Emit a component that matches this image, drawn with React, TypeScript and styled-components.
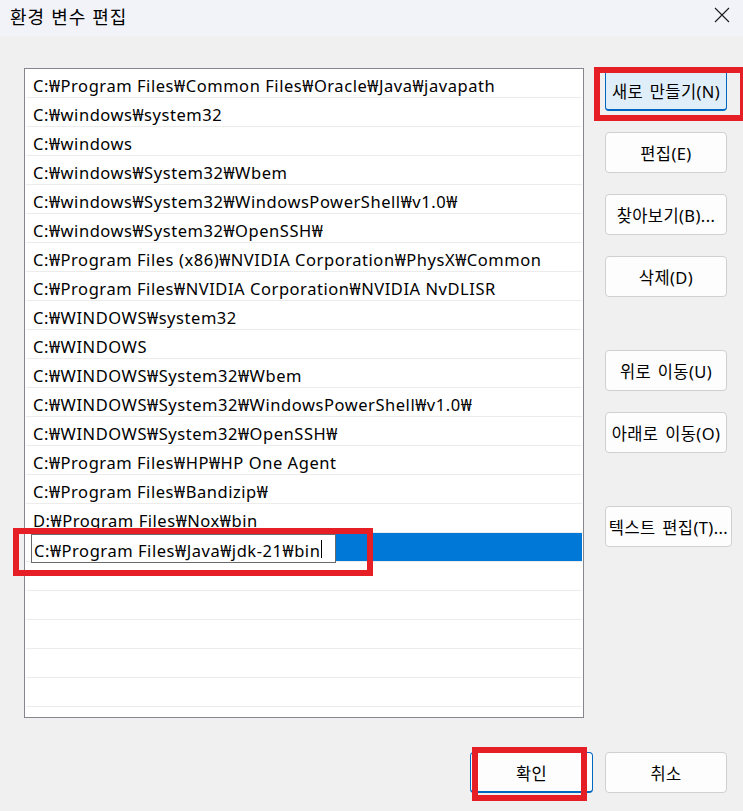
import React from "react";
import styled, { createGlobalStyle } from "styled-components";

const GlobalStyle = createGlobalStyle`
  html, body { margin: 0; padding: 0; background: #f0f0f0; }
  #root { width: 743px; height: 811px; }
  * { box-sizing: border-box; }
`;

const FONT = `"Noto Sans", "Noto Sans CJK KR", sans-serif`;

const Window = styled.div`
  position: relative;
  width: 743px;
  height: 811px;
  display: flex;
  flex-direction: column;
  background: #f0f0f0;
  font-family: ${FONT};
  color: #000;
  overflow: hidden;
`;

const TitleBar = styled.div`
  height: 36px;
  flex: none;
  background: #f2f3f9;
  display: flex;
  align-items: center;
  justify-content: space-between;
  padding: 0 10px 0 10px;
`;

const Title = styled.div`
  font-family: "Noto Sans CJK KR", sans-serif;
  font-size: 18px;
  line-height: 20px;
  margin-top: -5px;
  letter-spacing: 1px;
  word-spacing: 1px;
`;

const CloseButton = styled.div`
  width: 24px;
  height: 24px;
  display: flex;
  align-items: center;
  justify-content: center;
  margin-right: -1px;
  margin-top: -7px;
`;

const Body = styled.div`
  flex: 1;
  display: flex;
  flex-direction: column;
  padding: 32px 16px 0 24px;
`;

const MainRow = styled.div`
  display: flex;
  align-items: flex-start;
`;

const ListBox = styled.div`
  flex: none;
  width: 560px;
  height: 650px;
  border: 1px solid #86868e;
  background: #fff;
  overflow: hidden;
  padding: 0 1px;
`;

const Row = styled.div`
  height: 29px;
  border-bottom: 1px solid #ececec;
  display: flex;
  align-items: center;
  padding-left: 7px;
  padding-top: 4px;
  font-size: 16.5px;
  letter-spacing: 0.55px;
  white-space: nowrap;
`;

const SelectedRow = styled.div`
  height: 29px;
  display: flex;
  align-items: stretch;
  padding-left: 5px;
  background: #fff;
  border-bottom: 1px solid #ececec;
`;

const EditBox = styled.div`
  flex: none;
  height: 29px;
  width: 305px;
  margin-top: 1px;
  border: 1px solid #6a6a6a;
  background: #fff;
  display: flex;
  align-items: center;
  padding-left: 2px;
  padding-top: 3px;
  font-size: 16.5px;
  letter-spacing: 0.55px;
  white-space: nowrap;
  position: relative;
  z-index: 1;
`;

const SelectionFill = styled.div`
  flex: 1;
  height: 28px;
  background: #0078d7;
`;

const Caret = styled.span`
  display: inline-block;
  width: 1px;
  height: 18px;
  background: #000;
  margin-left: 1px;
  margin-top: -2px;
`;

const ButtonColumn = styled.div`
  flex: none;
  display: flex;
  flex-direction: column;
  margin-left: 21px;
  padding-top: 2px;
`;

const Button = styled.div<{ $width?: number; $gap?: number; $focused?: boolean; $default?: boolean }>`
  width: ${(p) => p.$width ?? 122}px;
  height: 41px;
  margin-top: ${(p) => p.$gap ?? 0}px;
  border-radius: 4px;
  border: 1px solid ${(p) => (p.$focused || p.$default ? "#0067c0" : "#d0d0d0")};
  border-bottom-width: ${(p) => (p.$focused || p.$default ? 2 : 1)}px;
  background: ${(p) => (p.$focused ? "#e0eef9" : "#fdfdfd")};
  display: flex;
  align-items: center;
  justify-content: center;
  font-size: 16.5px;
  letter-spacing: 0.4px;
  word-spacing: 2px;
  white-space: nowrap;
  overflow: visible;
  padding-top: 1px;
  font-family: ${FONT};
`;

const Footer = styled.div`
  display: flex;
  justify-content: flex-end;
  gap: 12px;
  margin-top: 34px;
`;

const Highlight = styled.div<{ $x: number; $y: number; $w: number; $h: number }>`
  position: absolute;
  left: ${(p) => p.$x}px;
  top: ${(p) => p.$y}px;
  width: ${(p) => p.$w}px;
  height: ${(p) => p.$h}px;
  border: 6px solid #e61f26;
  pointer-events: none;
  z-index: 5;
`;

const paths = [
  "C:₩Program Files₩Common Files₩Oracle₩Java₩javapath",
  "C:₩windows₩system32",
  "C:₩windows",
  "C:₩windows₩System32₩Wbem",
  "C:₩windows₩System32₩WindowsPowerShell₩v1.0₩",
  "C:₩windows₩System32₩OpenSSH₩",
  "C:₩Program Files (x86)₩NVIDIA Corporation₩PhysX₩Common",
  "C:₩Program Files₩NVIDIA Corporation₩NVIDIA NvDLISR",
  "C:₩WINDOWS₩system32",
  "C:₩WINDOWS",
  "C:₩WINDOWS₩System32₩Wbem",
  "C:₩WINDOWS₩System32₩WindowsPowerShell₩v1.0₩",
  "C:₩WINDOWS₩System32₩OpenSSH₩",
  "C:₩Program Files₩HP₩HP One Agent",
  "C:₩Program Files₩Bandizip₩",
  "D:₩Program Files₩Nox₩bin",
];

export default function App() {
  return (
    <>
      <GlobalStyle />
      <Window>
        <TitleBar>
          <Title>환경 변수 편집</Title>
          <CloseButton>
            <svg width="16" height="16" viewBox="0 0 16 16">
              <path d="M1 1 L15 15 M15 1 L1 15" stroke="#1a1a1a" strokeWidth="1.1" fill="none" />
            </svg>
          </CloseButton>
        </TitleBar>
        <Body>
          <MainRow>
            <ListBox>
              {paths.map((p) => (
                <Row key={p}>{p}</Row>
              ))}
              <SelectedRow>
                <EditBox>
                  C:₩Program Files₩Java₩jdk-21₩bin
                  <Caret />
                </EditBox>
                <SelectionFill />
              </SelectedRow>
              {Array.from({ length: 6 }).map((_, i) => (
                <Row key={"e" + i} />
              ))}
            </ListBox>
            <ButtonColumn>
              <Button $focused>새로 만들기(N)</Button>
              <Button $gap={21}>편집(E)</Button>
              <Button $gap={21}>찾아보기(B)...</Button>
              <Button $gap={21}>삭제(D)</Button>
              <Button $gap={53}>위로 이동(U)</Button>
              <Button $gap={21}>아래로 이동(O)</Button>
              <Button $gap={53} $width={127}>텍스트 편집(T)...</Button>
            </ButtonColumn>
          </MainRow>
          <Footer>
            <Button $width={123} $default>확인</Button>
            <Button>취소</Button>
          </Footer>
        </Body>
        <Highlight $x={594} $y={67} $w={152} $h={54} />
        <Highlight $x={13} $y={528} $w={360} $h={48} />
        <Highlight $x={472} $y={747} $w={115} $h={54} />
      </Window>
    </>
  );
}
